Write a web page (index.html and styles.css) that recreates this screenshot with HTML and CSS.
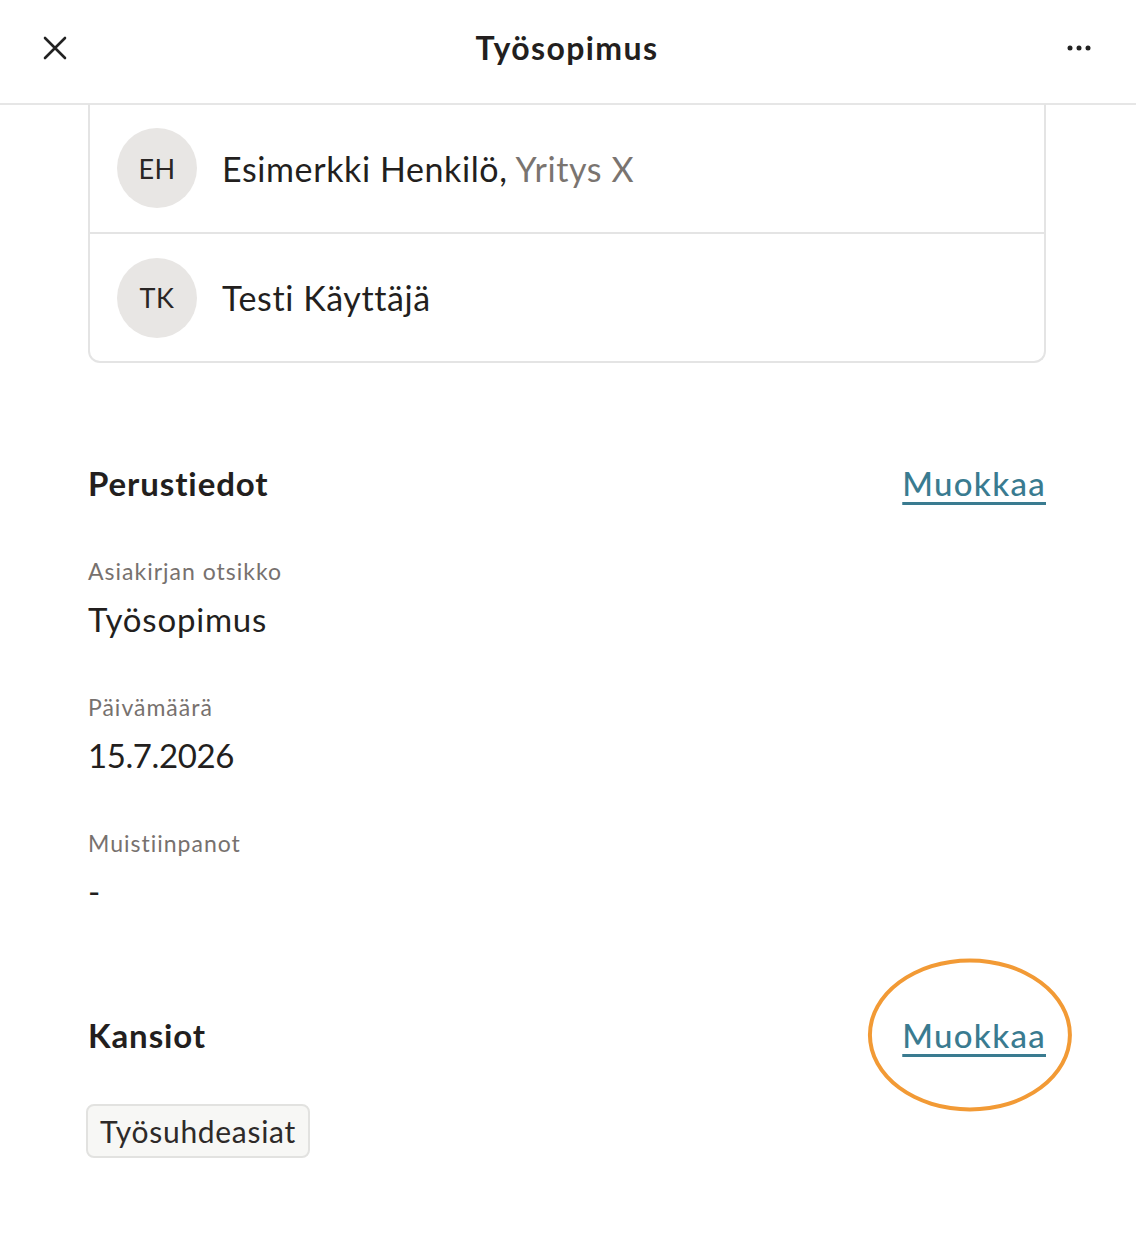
FILE: index.html
```html
<!DOCTYPE html>
<html lang="fi">
<head>
<meta charset="utf-8">
<title>Työsopimus</title>
<link rel="stylesheet" href="styles.css">
</head>
<body>
<header class="topbar">
  <button class="icon-btn" aria-label="Sulje">
    <svg width="26" height="26" viewBox="0 0 26 26"><path d="M3 3 L23 23 M23 3 L3 23" stroke="#222" stroke-width="2.6" stroke-linecap="round" fill="none"/></svg>
  </button>
  <h1 class="title">Työsopimus</h1>
  <button class="icon-btn" aria-label="Lisää">
    <svg width="24" height="8" viewBox="0 0 24 8"><circle cx="3" cy="4" r="2.5" fill="#222"/><circle cx="12" cy="4" r="2.5" fill="#222"/><circle cx="21" cy="4" r="2.5" fill="#222"/></svg>
  </button>
</header>
<main class="content">
  <div class="people">
    <div class="person">
      <div class="avatar">EH</div>
      <div class="name">Esimerkki Henkilö, <span class="company">Yritys X</span></div>
    </div>
    <div class="person">
      <div class="avatar">TK</div>
      <div class="name">Testi Käyttäjä</div>
    </div>
  </div>

  <section class="section basics">
    <div class="section-head">
      <h2>Perustiedot</h2>
      <a class="edit" href="#">Muokkaa</a>
    </div>
    <div class="fields">
      <div class="field">
        <div class="label">Asiakirjan otsikko</div>
        <div class="value">Työsopimus</div>
      </div>
      <div class="field">
        <div class="label">Päivämäärä</div>
        <div class="value num">15.7.2026</div>
      </div>
      <div class="field">
        <div class="label">Muistiinpanot</div>
        <div class="value">-</div>
      </div>
    </div>
  </section>

  <section class="section folders">
    <div class="section-head">
      <h2>Kansiot</h2>
      <a class="edit" href="#">Muokkaa<span class="ring"></span></a>
    </div>
    <div class="chips">
      <span class="chip">Työsuhdeasiat</span>
    </div>
  </section>
</main>
</body>
</html>
```

FILE: styles.css
```css
* { box-sizing: border-box; }

body {
  margin: 0;
  background: #fff;
  color: #231f1e;
  font-family: "Lato", "Noto Sans", sans-serif;
}

.topbar {
  height: 105px;
  display: flex;
  align-items: center;
  justify-content: space-between;
  padding: 0 44px 8px 42px;
  border-bottom: 2px solid #e6e6e6;
}

.icon-btn {
  background: none;
  border: 0;
  padding: 0;
  width: 26px;
  height: 26px;
  display: flex;
  align-items: center;
  justify-content: center;
}

.title {
  margin: 0;
  font-size: 32px;
  font-weight: 700;
  letter-spacing: 1.4px;
}

.content {
  padding: 0 90px 0 88px;
}

.people {
  border: 2px solid #e4e4e4;
  border-top: 0;
  border-radius: 0 0 12px 12px;
  margin-top: -1px;
}

.person {
  height: 128px;
  display: flex;
  align-items: center;
  gap: 25px;
  padding-left: 27px;
}

.person + .person {
  border-top: 2px solid #e4e4e4;
  height: 129px;
}

.avatar {
  width: 80px;
  height: 80px;
  border-radius: 50%;
  background: #e8e6e4;
  display: flex;
  align-items: center;
  justify-content: center;
  font-size: 27px;
  letter-spacing: 0.5px;
  color: #2a2625;
}

.name {
  font-size: 34px;
  letter-spacing: 0.6px;
  color: #231f1e;
}

.company {
  color: #7a7470;
}

.section-head {
  display: flex;
  align-items: center;
  justify-content: space-between;
  height: 50px;
}

.section-head h2 {
  margin: 0;
  font-size: 33px;
  font-weight: 700;
  letter-spacing: 0.9px;
}

.edit {
  position: relative;
  color: #3a7b90;
  font-size: 33px;
  font-weight: 500;
  letter-spacing: 1.3px;
  text-decoration: underline;
  text-underline-offset: 6px;
  text-decoration-thickness: 3px;
}

.ring {
  position: absolute;
  left: 50%;
  top: 50%;
  width: 204px;
  height: 153px;
  transform: translate(-52%, -50%);
  border: 4px solid #f29a35;
  border-radius: 50%;
  pointer-events: none;
}

.basics {
  margin-top: 95px;
}

.fields {
  display: flex;
  flex-direction: column;
  gap: 52px;
  margin-top: 47px;
}

.label {
  font-size: 23px;
  line-height: 32px;
  letter-spacing: 1px;
  color: #77716e;
}

.value {
  font-size: 33px;
  line-height: 40px;
  margin-top: 12px;
  letter-spacing: 0.8px;
  color: #231f1e;
}

.value.num {
  letter-spacing: -0.4px;
}

.folders {
  margin-top: 99px;
}

.chips {
  margin-top: 44px;
  display: flex;
  margin-left: -2px;
}

.chip {
  display: inline-block;
  height: 54px;
  line-height: 50px;
  padding: 0 12px;
  border: 2px solid #e2e2e0;
  border-radius: 8px;
  background: #f7f7f5;
  font-size: 30px;
  letter-spacing: 0.7px;
  color: #2e2a29;
}
```
